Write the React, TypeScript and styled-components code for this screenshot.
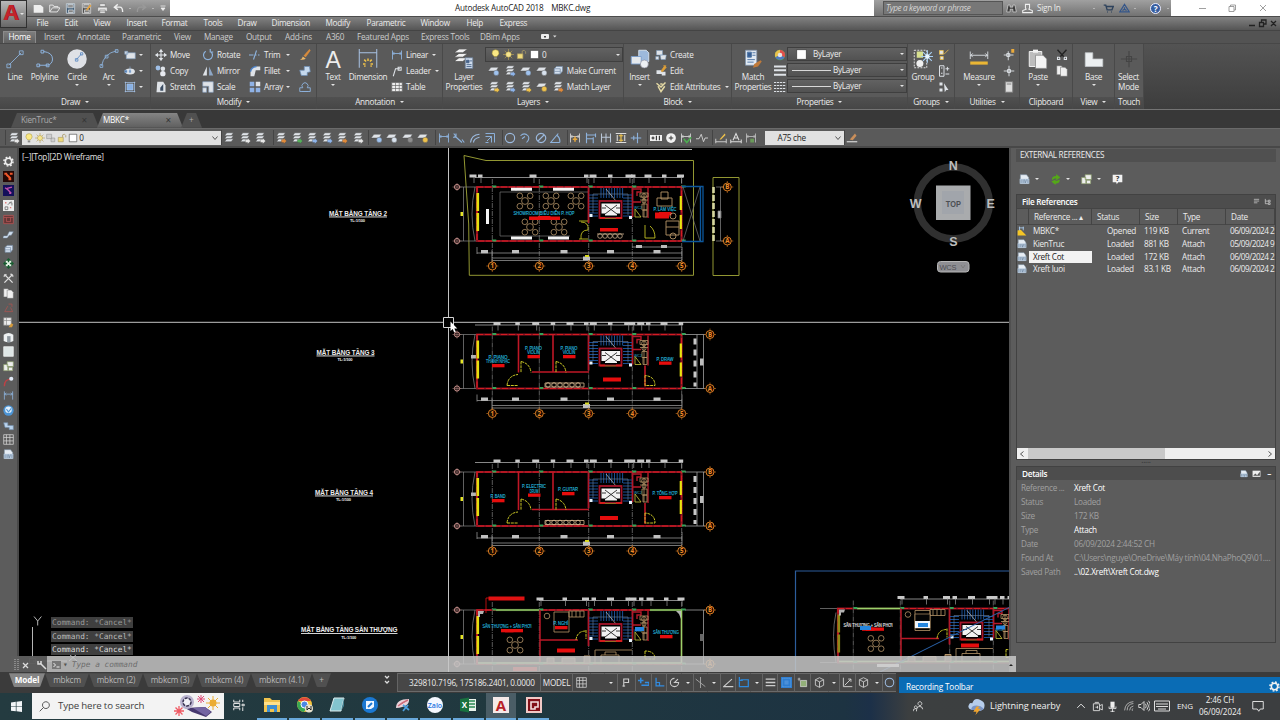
import React from 'react';
import styled, { createGlobalStyle, css } from 'styled-components';

const GlobalStyle = createGlobalStyle`
    * {
        box-sizing: border-box;
    }

    body {
        margin: 0;
        overflow: hidden;
        background: #5b5b5b;
        color: #ececec;
        font-family: 'Open Sans', 'Noto Sans', sans-serif;
        font-size: 8.2px;
        line-height: 10px;
        letter-spacing: -0.28px;
        white-space: nowrap;
    }

    svg {
        display: block;
        flex: none;
        letter-spacing: 0;
    }
`;

/* ---------- icons ---------- */

const L = '#dfe3e8';
const B = '#8db2dc';
const Y = '#f0c24a';

const Stack = ({ accent }: { accent?: string }) => (
    <>
        <path d="M5 1h9l-3 4H2zM5 5h9l-3 4H2zM5 9h9l-3 4H2z" fill={L} stroke="#4a4a4a" strokeWidth=".7" />
        {accent && <path d="M8.5 10h3v-2l4 4-4 4v-2h-3z" fill={accent} stroke="#444" strokeWidth=".4" />}
    </>
);

const Sheet = ({ accent }: { accent: string }) => (
    <>
        <path d="M4 3h10l-3 5H0z" fill={L} stroke="#4a4a4a" strokeWidth=".6" />
        <circle cx="11" cy="10.500" r="3.500" fill={accent} stroke="#555" strokeWidth=".5" />
    </>
);

const Dim = ({ accent = B }: { accent?: string }) => (
    <path d="M2 2v12M14 2v12M2 6h12M4.5 4 2.5 6l2 2M11.5 4l2 2-2 2" fill="none" stroke={accent} strokeWidth="1.2" />
);

const Page = ({ x = 3, y = 1 }: { x?: number; y?: number }) => (
    <path d={`M${x} ${y}h6l3 3v9h-9z`} fill="#f0f0f0" stroke="#666" strokeWidth=".7" />
);

const glyphs: Record<string, React.ReactNode> = {
    new: <path d="M1 3h10l4 3v8H1z" fill="#eee" />,
    open: <path d="M1 13V3h5l1 2h6v2M1 13l4-6h11l-4 6z" fill="none" stroke="#e4e4e4" strokeWidth="1.4" />,
    save: <path d="M2 1h12v14H2zM4 2v5h8V2zM5 10v4h7v-4z" fill="#3e5a74" stroke="#e4e9ee" fillRule="evenodd" />,
    saveas: (
        <>
            <path d="M2 1h12v14H2zM4 2v5h8V2zM5 10v4h7v-4z" fill="#4a4a4a" stroke="#eee" fillRule="evenodd" />
            <path d="m7 10 6-8 2 2-6 7z" fill="#e8a33c" />
        </>
    ),
    print: <path d="M4 1h8v4H4zM1 6h14v6H1zM4 10h8v5H4z" fill="#e6e6e6" stroke="#666" strokeWidth=".7" />,
    undo: <path d="M7 2 2 6l5 4M2 6h8q4 0 4 7" fill="none" stroke="#eee" strokeWidth="2" />,
    redo: <path d="m9 2 5 4-5 4M14 6H6q-4 0-4 7" fill="none" stroke="#999" strokeWidth="2" />,
    menu: <path d="M3 4h10M4 8h8l-4 5z" fill="#eee" stroke="#eee" strokeWidth="1.6" />,
    binoculars: <path d="M3 3h3v3h4V3h3l2 10h-5V9H6v4H1z" fill="#3b3b3b" stroke="#ddd" />,
    user: <path d="M5 2h6v5l-1 2 5 2v3H1v-3l5-2-1-2z" fill="none" stroke="#f0f0f0" strokeWidth="1.5" />,
    cart: <path d="M1 3h3l2 7h7l2-5H5M6 13h1M12 13h1" fill="none" stroke="#2e425c" strokeWidth="2" />,
    triangle: <path d="M8 2 1 13h14zM8 6v4M5 11l3-2 3 2" fill="none" stroke="#33558a" strokeWidth="1.7" />,
    line: <path d="M3 13 13 3M1.5 12h3v3h-3zM11.5 1.5h3v3h-3z" fill="none" stroke={B} strokeWidth=".7" />,
    polyline: (
        <path d="M3 13h7q4-1 4-5 0-5-7-6M1.5 12h2.2v2.2H1.500zM4.800 1H7v2.200H4.800zM9 12h2.200v2.200H9z" fill="none" stroke={B} strokeWidth=".8" />
    ),
    circle: (
        <>
            <circle cx="8" cy="8" r="7.8" fill="#dfe1e6" />
            <path d="m7.5 8.500 4-4.500M6.700 7.700h2v2h-2zM10.800 3h1.800v1.800h-1.800z" fill="none" stroke="#5e8cc4" strokeWidth=".7" />
        </>
    ),
    arc: (
        <path d="M2 13.500Q4 3.500 14 1.500M.8 12.500h2.200v2.200H.8zM5 5h2.200v2.200H5zM13 .5h2.200v2.200H13z" fill="none" stroke={B} strokeWidth=".7" />
    ),
    rect: <path d="M3 5h12v8H3zM1 3h4v4H1z" fill={L} stroke="#7899bd" strokeWidth=".8" />,
    ellipse: (
        <>
            <ellipse cx="8" cy="8.500" rx="6.500" ry="4" fill={L} />
            <path d="M8 2v5M1 7h3v3H1zM7 7h2v3H7z" fill="#4f79ad" stroke={B} strokeWidth=".8" />
        </>
    ),
    hatch: <path d="M2 1v14M14 1v14M1 2h14M1 14h14M4 4h8v8H4z" fill="#88b0e4" stroke="#a9c8ee" strokeWidth=".9" />,
    move: (
        <>
            <path d="M8 1v14M1 8h14" stroke={L} strokeWidth="1.500" />
            <path d="m8 0 3 4H5zM8 16l3-4H5zM0 8l4-3v6zM16 8l-4-3v6z" fill={L} />
        </>
    ),
    copy: (
        <>
            <circle cx="4" cy="4" r="3.200" fill="#9fbfe6" />
            <circle cx="10.500" cy="5" r="3" fill={L} />
            <circle cx="10.500" cy="11.500" r="3.600" fill="#e8eaf0" />
        </>
    ),
    stretch: (
        <>
            <path d="M3 1h8l3 5v9H2z" fill={L} />
            <path d="m7 9 4-5v9H7z" fill="#3b4c62" />
        </>
    ),
    rotate: <path d="M5 3a6 6 0 1 0 6 0M11 0v4h4" fill="none" stroke={B} strokeWidth="1.600" />,
    mirror: (
        <>
            <path d="M6.500 2v12H1z" fill={L} />
            <path d="M9.500 2v12H15z" fill="#8ea7c6" />
        </>
    ),
    scale: <path d="M1 1h14v14H9V7H1zM1 9h5v6H1z" fill={L} stroke="#88a4c8" strokeWidth=".8" />,
    trim: <path d="M0 8h6M8 8h2M12 8h2M6 14 10 2" stroke={B} strokeWidth="1.500" fill="none" />,
    fillet: (
        <>
            <path d="M2 15V9q1-6 8-7h5v5H9l-2 8z" fill={L} />
            <path d="M2 9q1-6 8-7" fill="none" stroke="#4f82c5" strokeWidth="2" />
        </>
    ),
    array: (
        <>
            <path d="M1 1h6v6H1zM1 9h6v6H1zM9 9h6v6H9z" fill="#8fb2e6" />
            <path d="M9 1h6v6H9z" fill={L} />
        </>
    ),
    brush: (
        <>
            <path d="M6 9 14 0l1.500 2L9 11z" fill="#d68a3c" />
            <path d="M1 14q3 0 4-4l4 3q-3 2-8 1z" fill="#eeb868" />
        </>
    ),
    explode: <path d="M1 7h6V2h7l1 7-4 1v4H3z" fill="#c5d9ee" stroke="#6d8eb4" />,
    offset: <path d="M5 9a4 4 0 1 1 6 0h4v5H1V9zM4 14h8" fill="none" stroke={B} strokeWidth="1.200" />,
    bigdim: (
        <>
            <path d="M1 0v15M15 0v15M1 3h14" fill="none" stroke="#a9c3e5" strokeWidth=".8" />
            <path d="M4 12h2M10 12h2M5 8.500l1.500 1.500M11 8.500 9.500 10M8 7.500v2M5 14l1-.700M11 14l-1-.700" stroke={Y} strokeWidth="1.200" />
        </>
    ),
    dim: <Dim />,
    leader: <path d="M3 15 6 5h6M9.500 3h4v4h-4z" fill="none" stroke={L} strokeWidth="1.400" />,
    table: <path d="M1 2h14v12H1zM1 6h14M1 10h14M6 2v12M11 2v12" fill="#eee" stroke="#666" strokeWidth=".9" />,
    layerprops: (
        <>
            <path d="M4 0h7L7 3H0zM4 3.500h7L7 6.500H0zM4 7h7l-4 3H0z" fill="#f0f0f0" stroke="#444" strokeWidth=".5" />
            <path d="M9 7h6v8.500H9z" fill="#cfdcec" stroke="#667b96" strokeWidth=".6" />
            <path d="M10 9h2v2h-2zM12.500 9.500h2M10 12.500h4M10 14h4" stroke="#47648a" strokeWidth=".7" fill="#47648a" />
        </>
    ),
    stack: <Stack />,
    stackblue: <Stack accent="#8eb4ea" />,
    stackgreen: <Stack accent="#55b05a" />,
    stackorange: <Stack accent="#e08a3a" />,
    stackyellow: <Stack accent={Y} />,
    stackgray: <Stack accent="#e8e8e8" />,
    sheetblue: <Sheet accent="#9fc2ee" />,
    sheetyellow: <Sheet accent={Y} />,
    sheetwhite: <Sheet accent="#d8e2ee" />,
    sheetgray: <Sheet accent="#8e8e8e" />,
    bulb: (
        <>
            <path d="M8 1q5 0 5 5 0 2-3 5H6Q3 8 3 6q0-5 5-5z" fill="#fbe985" stroke="#a39239" strokeWidth=".8" />
            <path d="M6 12h4v3H6z" fill="#888" />
        </>
    ),
    sun: (
        <>
            <path d="M8 0v16M0 8h16M2.500 2.500l11 11M13.500 2.500l-11 11" stroke="#b39d55" />
            <circle cx="8" cy="8" r="4" fill="#f6e58f" stroke="#a08c3b" strokeWidth=".7" />
        </>
    ),
    lock: (
        <>
            <path d="M9 7V3q3-3 5 1v3" fill="none" stroke="#a69662" strokeWidth="1.200" />
            <path d="M2 7h8v7H2z" fill="#f0db7a" stroke="#a69662" />
        </>
    ),
    white: <path d="M2 2h12v12H2z" fill="#fff" stroke="#333" strokeWidth=".9" />,
    freeze: <path d="M1 2h8v7H1zM8 8h6v6H8z" fill="#cfcfcf" stroke="#999" />,
    insert: (
        <>
            <path d="M7 1h6l2 2v7H7z" fill="#9db9dc" stroke="#dde7f2" strokeWidth=".7" />
            <path d="M1 6h8v6H1z" fill="#e4e8ec" stroke="#779ccb" strokeWidth=".7" />
            <circle cx="11.500" cy="12" r="3.200" fill="#eef0f4" stroke="#889" strokeWidth=".5" />
        </>
    ),
    create: <path d="M2 2h8v6H2zM7 8h8l-1 6H8zM1 10h4v4H1z" fill={L} stroke="#7d9dc2" strokeWidth=".7" />,
    edit: (
        <>
            <path d="M2 7h7v5H2zM9 9h5v5H9z" fill={L} />
            <path d="m8 8 5-7 2 2-5 6zM11 1h4" fill="#dfa038" stroke="#dfa038" />
        </>
    ),
    attr: <path d="m2 3 6 5 6-6M4 7l4 7 5-7M7 4h3" fill="none" stroke="#e4d9a4" strokeWidth="2" />,
    match: (
        <>
            <path d="M2 1h9v12H2z" fill="#e2eaf3" stroke="#7f93ab" strokeWidth=".6" />
            <path d="M3.500 2.500h3.200v4H3.500zM7.500 3h2.500M7.500 5h2.500M3.500 8.500h6M3.500 10.500h5" stroke="#547aa8" strokeWidth=".8" fill="#365e95" />
            <path d="m9 12 5-3 1 1-3 4-4 1z" fill="#c07a3a" />
        </>
    ),
    wheel: (
        <>
            <circle cx="8" cy="8" r="7" fill="#58a55c" />
            <path d="M8 8V1a7 7 0 0 1 6 10z" fill="#e2504b" />
            <path d="M8 8V1a7 7 0 0 0-6 10z" fill="#e9c14b" />
            <path d="m8 8-6 3a7 7 0 0 0 12 0z" fill="#5079c5" />
            <circle cx="8" cy="8" r="3" fill="#e5e5e5" />
        </>
    ),
    weights: <path d="M0 2h16M0 7h16M0 13h16" stroke={L} strokeWidth="2.600" />,
    types: <path d="M0 2h16M0 6h16M0 10h16M0 14h16" stroke={L} strokeWidth="1.300" strokeDasharray="3 1" />,
    group: (
        <>
            <path d="M1 1h10v14H1z" fill="none" stroke="#ddd" strokeWidth=".8" strokeDasharray="1.500 1" />
            <path d="M3 2h5v5H3z" fill="#d7e08f" />
            <circle cx="5.500" cy="11.500" r="2.800" fill="#f0f0f0" />
            <path d="M11.500 1v10M6.500 6h10M8 2.500l7 7M15 2.500l-7 7" stroke="#a9d0f4" strokeWidth=".9" />
            <circle cx="11.500" cy="6" r="1.800" fill="#e9f5ff" />
        </>
    ),
    groupedit: <path d="M2 2h5v5H2zM3 10h4v4H3zM8 7l6-6" fill={L} stroke={Y} />,
    groupadd: <path d="M2 1h6v14H2zM4 4h2M4 11h2M10 5h5M12.500 2.500v5M10 12h5" fill="none" stroke={L} strokeWidth="1.300" />,
    groupsel: <path d="M2 2h4v4H2zM2 10h4v4H2zM8 3l6 9h-3l-2 3z" fill={L} />,
    measure: (
        <>
            <path d="M1 2v6M15 2v6M1 5h14M3 3.500 1.500 5 3 6.500M13 3.500 14.500 5 13 6.500" stroke="#dfe3e8" strokeWidth=".7" fill="none" />
            <path d="M1 10h14v2.500H1z" fill="#eab634" />
        </>
    ),
    point: <path d="M8 1v14M1 8h14M6 6h4v4H6z" fill="none" stroke={L} strokeWidth="1.200" />,
    quick: (
        <>
            <path d="M7 3v12M1 8h13M5 6h4v4H5z" fill="none" stroke={L} strokeWidth="1.200" />
            <path d="M11 0h4v5h-4z" fill="#e9aa3c" />
        </>
    ),
    calc: <path d="M3 1h10v14H3zM5 4h6" fill="#ddd" stroke="#777" strokeWidth="1.200" />,
    paste: (
        <>
            <path d="M1 2h10v12H1z" fill="#bdbdbd" stroke="#f0f0f0" strokeWidth=".8" />
            <path d="M4 .5h4v2.500H4z" fill="#f2f2f2" />
            <path d="M6 5h6l3 3v7.500H6z" fill="#f4f4f4" stroke="#777" strokeWidth=".5" />
        </>
    ),
    cut: (
        <>
            <path d="m2 1 9 10M14 1 5 11" stroke="#222" strokeWidth="1.800" />
            <path d="M2 11h3v3H2zM11 11h3v3h-3z" fill="none" stroke={L} strokeWidth="1.400" />
        </>
    ),
    pages: (
        <>
            <Page x={1} y={1} />
            <Page x={6} y={3} />
        </>
    ),
    base: <path d="M1 3h6v5h8v6H1z" fill="#eceff1" stroke="#c4c8cc" strokeWidth=".6" />,
    touch: <path d="M8 1.500v13M1.500 8h13M6 6h4v4H6z" fill="none" stroke="#444" strokeWidth=".9" />,
    ring: <circle cx="8" cy="8" r="6.200" fill="none" stroke="#9dbbe0" strokeWidth="1.500" />,
    diameter: <path d="M8 1.800a6.200 6.200 0 1 0 .1 0M4 12l8-8" fill="none" stroke="#9dbbe0" strokeWidth="1.500" />,
    jog: <path d="M2 5q5-5 10 0 3 4-2 9M4 9l4-3" fill="none" stroke={B} strokeWidth="1.400" />,
    angle: <path d="M13 14H1L11 2M9 4q5 4 4 10" fill="none" stroke={B} strokeWidth="1.500" />,
    aligned: <path d="m2 5 10 9M1 2l3 4M12 10l3 4M4 2v5H0" fill="none" stroke={B} strokeWidth="1.500" />,
    arclen: <path d="M2 14Q3 4 14 3M6 14q0-5 8-7" fill="none" stroke="#9dbbe0" strokeWidth="1.500" />,
    ordinate: <path d="M2 2h12v12M2 6h8v8M4 12l6-6M6 14H2" fill="none" stroke={B} strokeWidth="1.300" />,
    dimstar: (
        <>
            <Dim accent="#d0d0d0" />
            <path d="M8 6v7M5 9.500h6" stroke="#e7a83b" strokeWidth="2" />
        </>
    ),
    baseline: <path d="M2 1v14M2 4h12M2 9h9M14 2v5M11 7v8" fill="none" stroke={B} strokeWidth="1.500" />,
    cont: <path d="M2 2v12M8 2v12M14 2v12M2 7h12" fill="none" stroke="#bac7d8" strokeWidth="1.400" />,
    space: (
        <>
            <path d="M1 2h14M1 14h14M3 4v8M13 4v8" stroke="#ddd" strokeWidth="1.400" />
            <path d="M8 3v10M5 5h6M5 11h6" stroke={Y} strokeWidth="1.600" />
        </>
    ),
    breakdim: <path d="M10 1v14M1 8h14M5 5v6" fill="none" stroke={B} strokeWidth="1.500" />,
    tol: (
        <>
            <path d="M0 4h16v8H0z" fill="#f0f0f0" />
            <path d="M2 8h4M4 6v4M8.500 5v6M12.500 5v6" stroke="#222" strokeWidth="1.400" />
        </>
    ),
    center: (
        <>
            <circle cx="8" cy="8" r="6.500" fill="#f1f1f1" />
            <path d="M8 5v6M5 8h6" stroke="#333" strokeWidth="1.300" />
        </>
    ),
    inspect: (
        <>
            <Dim accent="#d0d0d0" />
            <path d="m5 9 4 5 6-7" fill="none" stroke="#4cae50" strokeWidth="2" />
        </>
    ),
    zigzag: <path d="M0 9h4l3-6 3 10 2-5h4" fill="none" stroke="#ccc" strokeWidth="1.300" />,
    dimedit: (
        <>
            <path d="M1 13h14M1 9v6M15 9v6" stroke="#ccc" strokeWidth="1.300" />
            <path d="m6 10 7-8 1 2-6 6z" fill={Y} />
        </>
    ),
    dimtext: <path d="M1 13h14M1 10v5M15 10v5M4 11l4-9 4 9M6 8h4" fill="none" stroke="#ddd" strokeWidth="1.400" />,
    dimupd: (
        <>
            <Dim accent="#b9b9b9" />
            <path d="M7 9h5v5H7z" fill="#6a9a5a" />
        </>
    ),
    dimbrush: (
        <>
            <path d="M1 13h14" stroke="#ddd" strokeWidth="1.500" />
            <path d="m5 10 7-8 2 3-5 6z" fill="#c98e5a" />
        </>
    ),
    gear: (
        <>
            <circle cx="8" cy="8" r="4.600" fill="none" stroke="#f1f1f1" strokeWidth="2.200" />
            <circle cx="8" cy="8" r="6.600" fill="none" stroke="#f1f1f1" strokeWidth="2.200" strokeDasharray="2.590 2.590" />
        </>
    ),
    redtool: (
        <>
            <path d="M0 0h16v16H0z" fill="#240806" />
            <path d="M2 4h4M10 4h4M5 5l6 6M8 12h4" stroke="#f0572b" strokeWidth="3" />
        </>
    ),
    purpletool: (
        <>
            <path d="M0 0h16v16H0z" fill="#14105a" />
            <path d="m3 4 3 2 6 6M6 5l7-2M9 12h3" fill="none" stroke="#c24fae" strokeWidth="2" />
        </>
    ),
    scatter: (
        <>
            <path d="M0 0h16v16H0z" fill="#ececec" />
            <path d="M3 10h4v4H3zM7 7l5-5M9 4h4v4" fill="none" stroke="#6b6b6b" strokeWidth="1.200" />
            <path d="M3 3h2v2H3zM10 10h2v2h-2z" fill="#dc7777" />
        </>
    ),
    redframe: <path d="M1 2v12h14V2zM1 5h14M5 5v6h6V5" fill="#643636" stroke="#b85656" strokeWidth="1.100" />,
    slab: <path d="M1 10h5l3-6h6l-3 5H9l-3 4H0z" fill="#d3e1ef" stroke="#7b93ad" strokeWidth=".7" />,
    box: <path d="m3 5 3-3h8v6l-3 4H3zM3 5h8v7M3 8.500h8" fill="#d5e1ef" stroke="#788da8" />,
    green: (
        <>
            <path d="m8 0 4 4 4 4-4 4-4 4-4-4-4-4 4-4z" fill="#185c30" />
            <path d="M4 4h3v2h2V4h3v3h-2v2h2v3H9v-2H7v2H4V9h2V7H4z" fill="#e7f4e7" />
        </>
    ),
    tools: <path d="m2 2 12 12M14 2 2 14M1 5l4-3M11 1l4 4" stroke="#ddd" strokeWidth="2" />,
    redaxis: <path d="M2 14h12L11 8M3 13l4-7M8 3h5v4" fill="none" stroke="#a65450" strokeWidth="1.200" />,
    grid: <path d="M1 1h14v14H1zM1 5h14M1 10h14M5 1v14M10 1v14" fill="none" stroke="#d5d5d5" strokeWidth="1.100" />,
    gridedit: (
        <>
            <path d="M1 1h11v11H1zM1 5h11M5 1v11" fill="#eee" stroke="#888" />
            <path d="m8 15 4-6 3 2-2 4z" fill="#d59b3c" />
        </>
    ),
    cylinder: (
        <>
            <path d="M1 4q7-5 14 0v9q-7 4-14 0z" fill="#eef1f2" />
            <path d="M6 6h5v9H6z" fill="#8e979e" />
        </>
    ),
    square: <path d="M1 1h14v14H1z" fill="#dfe6e6" stroke="#f6f6f6" />,
    tiles: <path d="M6 1h9v7H6zM1 5h6v9H1zM8 9h6v5H8z" fill="#eee" stroke="#8a9d6a" />,
    redcurve: (
        <>
            <path d="M2 15Q2 4 12 5" fill="none" stroke="#bd4145" strokeWidth="2" />
            <circle cx="12" cy="4" r="3" fill="#e3edfa" />
        </>
    ),
    globe: (
        <>
            <circle cx="8" cy="8" r="7.500" fill="#4c95d6" />
            <circle cx="8" cy="7" r="4.800" fill="#e1effb" />
            <path d="m5 6 3 4 4-5" fill="none" stroke="#4c95d6" strokeWidth="1.500" />
        </>
    ),
    steps: <path d="M1 4h6v4h8v6H9v-3H3z" fill="#b8d2ed" stroke="#738da8" />,
    refresh: <path d="M3 9Q2 3 9 3V0l6 5-6 4V6Q6 6 3 9zM14 8q1 6-6 6v2l-6-5 6-3v2q3 0 6-2z" fill="#54a818" />,
    dwg: (
        <>
            <path d="M2 1h9l3 4v9H2z" fill="#e6edf4" stroke="#8296ab" strokeWidth=".8" />
            <path d="M1 7h14v7H1z" fill="#b7cade" />
            <path d="M3 8v5M6 8v5M8 8l1 5 2-5M13 8v5" stroke="#5c748e" strokeWidth=".8" fill="none" />
        </>
    ),
    master: (
        <>
            <path d="m1 7 5-1 9 9H1z" fill="#f4c526" />
            <path d="M3 3h8M4 1v6M10 1v6" stroke="#a9cbee" strokeWidth="1.400" />
        </>
    ),
    tree: <path d="M3 2v11h6M3 7h6M10 5h4v4h-4zM10 11h4v4h-4z" fill="none" stroke="#ddd" strokeWidth="1.500" />,
    list: <path d="M2 3h12M2 7h12M2 11h8" stroke="#ccc" strokeWidth="1.700" />,
    help: (
        <>
            <path d="M1 1h14v11H9l-2 3-1-3H1z" fill="#f2f2f2" />
            <text x="8" y="10.500" textAnchor="middle" fontSize="11" fontWeight="700" fill="#333">?</text>
        </>
    ),
    picture: (
        <>
            <path d="M1 3h14v11H1z" fill="#eee" />
            <path d="m2 12 4-4 3 3 5-6v7z" fill="#555" />
        </>
    ),
    snap: <path d="M4 14V3h7v5H5M2 13h4" fill="none" stroke="#d0d0d0" strokeWidth="1.600" />,
    dyn: <path d="M4 1v8M0 5h8M5 12h11V8h-6" fill="none" stroke="#338ce0" strokeWidth="2.200" />,
    ortho: <path d="M3 1v12h12M3 8h5v5" fill="none" stroke="#338ce0" strokeWidth="1.800" />,
    polar: <path d="M8 2a6 6 0 1 0 6 6H8l5-5" fill="none" stroke="#ccc" strokeWidth="1.600" />,
    iso: <path d="m1 3 14 11M8 0v16" stroke="#aaa" strokeWidth="1.300" />,
    otrack: <path d="M15 14H1L13 3" fill="none" stroke="#ccc" strokeWidth="1.500" />,
    osnap: <path d="M4 4h11v10H2V6M2 0v5h5" fill="none" stroke="#2d8ade" strokeWidth="1.800" />,
    lwt: <path d="M1 3h14M1 8h14M1 12.500h14" stroke="#ccc" strokeWidth="2" />,
    transp: (
        <>
            <path d="M0 0h16v16H0z" fill="#2e7dd0" />
            <path d="M2 2h12v12H2z" fill="none" stroke="#5b9ce0" strokeWidth="1.500" strokeDasharray="1.500 1.500" />
            <path d="M5 5h6v6H5z" fill="#4b90da" />
        </>
    ),
    select: <path d="M1 3h4M3 1v5M5 5h9v9H5z" fill="#93b079" stroke="#dcdcdc" />,
    cube: <path d="m8 1 6 3v8l-6 3-6-3V4zM2 4l6 3 6-3M8 7v8" fill="none" stroke="#ccc" strokeWidth="1.300" />,
    ucs: <path d="M2 1v13h13M4 12 13 3M9 3h4v4" fill="none" stroke="#ccc" strokeWidth="1.400" />,
    search: <path d="M10 1a5 5 0 1 0 .1 0M6 10l-5 5" fill="none" stroke="#444" strokeWidth="1.300" />,
    taskview: <path d="M1 1v3h8V1M1 15v-3h8v3M1 6h8v4H1zM13 1v3M12 7h3v2h-3zM13 11v5" fill="none" stroke="#e6e6e6" strokeWidth="1.300" />,
    folder: (
        <>
            <path d="M0 1h6l2 2h8v12H0z" fill="#f0c24d" />
            <path d="M3 8h10v7h-3v-3H6v3H3z" fill="#3e8ed0" />
            <path d="M0 5h16v3H0z" fill="#ffe089" />
        </>
    ),
    chrome: (
        <>
            <circle cx="7.500" cy="7.500" r="7.500" fill="#f4c53c" />
            <path d="M1 4a7.500 7.500 0 0 1 13 0H8z" fill="#df493c" />
            <path d="M1 4a7.500 7.500 0 0 0 6 11l3-5z" fill="#37a854" />
            <circle cx="7.500" cy="7.500" r="3.500" fill="#4a88e5" stroke="#fff" />
            <circle cx="12" cy="11.500" r="4" fill="#e7e1ce" />
            <path d="M10 9v4l2-2 2 2V9" fill="none" stroke="#222" />
        </>
    ),
    notepad: (
        <>
            <path d="M5 1h10l-3 13H1z" fill="#83c4ce" stroke="#dcebed" />
            <path d="m12 14 3-13v8z" fill="#447f8e" />
        </>
    ),
    bluedoc: (
        <>
            <circle cx="8" cy="8" r="8" fill="#1b78d2" />
            <path d="M4 4h8v6l-3 2H4z" fill="#eef6ff" />
            <path d="m6 10 4-4" stroke="#1b78d2" strokeWidth="2" />
        </>
    ),
    snip: (
        <>
            <path d="M1 11q0-9 13-9 1 8-13 9z" fill="#ead4da" />
            <path d="M3 9q5-4 10-6" stroke="#d16c7c" strokeWidth="1.500" />
            <path d="m8 8 6 5M13 8l-5 6" stroke="#4c9ddd" strokeWidth="1.700" />
        </>
    ),
    zalo: (
        <>
            <circle cx="8" cy="8" r="8" fill="#f4f8ff" />
            <text x="8" y="10.500" textAnchor="middle" fontSize="7" fontWeight="600" fill="#2272df">Zalo</text>
        </>
    ),
    excel: (
        <>
            <path d="M5 2h11v12H5z" fill="#e8f2eb" />
            <path d="M9 4h6M9 7h6M9 10h6" stroke="#2b8955" strokeWidth="1.600" />
            <path d="m0 2 9-1.500v15L0 14z" fill="#19713f" />
            <text x="4.500" y="11" textAnchor="middle" fontSize="8" fontWeight="700" fill="#fff">X</text>
        </>
    ),
    acad: (
        <>
            <path d="M0 0h16v16H0z" fill="#f5e9e8" />
            <text x="8" y="13.500" textAnchor="middle" fontSize="15" fontWeight="700" fill="#b81f28">A</text>
        </>
    ),
    redapp: (
        <>
            <path d="M0 0h16v16H0z" fill="#f1c9c6" />
            <path d="M2 2h12v12H2z" fill="#820f17" />
            <path d="M5 5h7v5H9v2H5z" fill="none" stroke="#f4dede" strokeWidth="1.600" />
        </>
    ),
    people: (
        <path d="M10 1a2.800 2.800 0 1 0 .1 0M5 15q0-7 5-7 4 0 4 4M4 7a2 2 0 1 0 .1 0M0 15q0-4 4-4" fill="none" stroke="#ddd" strokeWidth="1.300" />
    ),
    storm: (
        <>
            <path d="M3 11q-4-1-2-5 1-2 3-1 2-6 8-3 5 2 3 8l-3 2z" fill="#b6cdeb" />
            <path d="M3 11q0-4 5-4 4 0 7 3l-3 2z" fill="#7894c6" />
            <path d="m8 8-3 5h3l-1 3 5-6H9l2-2z" fill="#f0a42e" />
        </>
    ),
    caret: <path d="m2 11 6-6 6 6" fill="none" stroke="#eee" strokeWidth="1.500" />,
    camera: <path d="M2 4h9v10H2zM11 7l4-2v8l-4-2M4 2h6M8 7v4M5 9h4" fill="none" stroke="#ddd" strokeWidth="1.300" />,
    mic: (
        <>
            <path d="M5 1h6v9H5z" fill="#eee" />
            <path d="M3 8v3h10V8M8 11v5M5 15h6" fill="none" stroke="#eee" strokeWidth="1.200" />
        </>
    ),
    wifi: <path d="M14 15h-1q0-2 1-3M9 15q0-6 6-7M5 15Q5 5 15 4M1 15Q2 2 15 1" fill="none" stroke="#bbb" strokeWidth="1.400" />,
    volume: <path d="M1 6h3l4-4v12l-4-4H1zM10 5q2 3 0 6M12 3q4 5 0 10M14 1q5 7 0 14" fill="none" stroke="#ddd" strokeWidth="1.200" />,
    keyboard: <path d="M.5 3h15v10H.5zM2 6h12M2 8.500h12M4 11h8" fill="none" stroke="#ddd" strokeWidth="1" />,
    notify: <path d="M1 2h14v10h-4l-2 3-2-3H1z" fill="none" stroke="#eee" strokeWidth="1.200" />,
    windows: <path d="m0 2 7-1v6.500H0zM8 1l8-1v7.500H8zM0 8.500h7V15l-7-1zM8 8.500h8V16l-8-1z" fill="#f2f5f7" />,
    chevron: <path d="m3 5 5 6 5-6" fill="none" stroke="#555" strokeWidth="2" />,
};

const Icon = ({ name, size = 11 }: { name: string; size?: number }) => (
    <svg width={size} height={size} viewBox="0 0 16 16">
        {glyphs[name]}
    </svg>
);

const Arrow = styled.i<{ $size?: number }>`
    flex: none;
    width: 0;
    border: ${({ $size = 2 }) => $size}px solid transparent;
    border-top-color: #e4e4e4;
    border-bottom: 0;
`;

/* ---------- window frame ---------- */

const Window = styled.div`
    display: flex;
    flex-direction: column;
    width: 1280px;
    height: 720px;
`;

const Header = styled.div`
    display: flex;
    height: 31px;
    background: #535353;
`;

const AppButton = styled.div`
    display: flex;
    align-items: center;
    width: 27px;
    height: 28px;
    padding-left: 2px;
    border: 1px solid #303030;
    background: linear-gradient(#b9b9b9, #676767);
`;

const AppLetter = styled.b`
    width: 17px;
    padding-bottom: 3px;
    color: #c3232b;
    font-family: 'Liberation Sans', sans-serif;
    font-size: 22px;
    line-height: 22px;
    text-shadow: 1px 0 #8f1118;
`;

const HeaderRows = styled.div`
    flex: 1;
    min-width: 0;
`;

const TitleRow = styled.div`
    display: flex;
    height: 16px;
    background: #fff;
`;

const QuickBar = styled.div`
    display: flex;
    align-items: center;
    gap: 5px;
    width: 143px;
    padding-left: 6px;
    background: linear-gradient(#a2a2a2, #747474);
`;

const Caption = styled.div`
    flex: 1;
    padding: 3px 0 0 285px;
    color: #222;
    letter-spacing: -0.22px;
    white-space: pre;
`;

const InfoCenter = styled.div`
    display: flex;
    align-items: center;
    width: 297px;
    background: linear-gradient(#a0a0a0, #727272);
`;

const KeywordBox = styled.div`
    width: 120px;
    height: 14px;
    margin: 0 3px 0 9px;
    padding: 1px 2px;
    border: 1px solid #555;
    background: #777;
    color: #d5d5d5;
    font-style: italic;
    letter-spacing: -0.35px;
`;

const SignIn = styled.span`
    width: 56px;
    margin-left: 4px;
`;

const HelpDot = styled.span`
    width: 11px;
    height: 11px;
    margin: 0 6px 0 14px;
    border: 1px solid #eef;
    border-radius: 50%;
    background: #355da0;
    color: #fff;
    font-weight: 700;
    line-height: 9px;
    text-align: center;
`;

const WindowButtons = styled.div`
    display: flex;
    align-items: center;
    justify-content: space-between;
    width: 109px;
    padding: 0 13px 0 28px;
`;

const MenuBar = styled.div`
    display: flex;
    align-items: center;
    height: 15px;
    padding-bottom: 1px;
    border-top: 1px solid #4c4c4c;
    border-bottom: 1px solid #444;
    background: linear-gradient(#828282, #555);
`;

const Slot = styled.div<{ $w?: number }>`
    flex: none;
    width: ${({ $w }) => ($w ? `${$w}px` : 'auto')};
`;

const RibbonTabs = styled.div`
    display: flex;
    align-items: center;
    height: 12px;
    background: #535353;
    color: #ccc;
`;

const HomeTab = styled.div`
    flex: none;
    width: 33px;
    height: 12px;
    margin: 0 8px 0 3px;
    border: 1px solid #8b8b8b;
    border-bottom: 0;
    background: linear-gradient(#7d7d7d, #606060);
    color: #fff;
    text-align: center;
`;

/* ---------- ribbon ---------- */

const RibbonRow = styled.div`
    display: flex;
    height: 67px;
    border-top: 1px solid #474747;
    border-bottom: 1px solid #747474;
    background: linear-gradient(#535353, #3d3d3d);
`;

const RibbonPanel = styled.div<{ $w: number }>`
    display: flex;
    flex: none;
    flex-direction: column;
    width: ${({ $w }) => $w}px;
    border-right: 1px solid #494949;
    background: #5a5a5a;
`;

const PanelBody = styled.div<{ $pad?: number }>`
    display: flex;
    height: 53px;
    padding: 3px 0 0 ${({ $pad = 0 }) => $pad}px;
`;

const PanelTitle = styled.div`
    display: flex;
    align-items: center;
    justify-content: center;
    gap: 5px;
    height: 12px;
    padding-bottom: 2px;
    background: linear-gradient(#505050, #464646);
`;

const BigRoot = styled.div<{ $w: number }>`
    display: flex;
    flex: none;
    flex-direction: column;
    align-items: center;
    width: ${({ $w }) => $w}px;
    padding-top: 2px;
    text-align: center;

    svg {
        margin-bottom: 3px;
    }

    ${Arrow} {
        margin-top: 2px;
    }
`;

const BigText = styled.div`
    height: 20px;
    margin-bottom: 3px;
    font-family: 'Liberation Sans', sans-serif;
    font-size: 23px;
    line-height: 22px;
`;

const Rows = styled.div<{ $w: number }>`
    flex: none;
    width: ${({ $w }) => $w}px;
`;

const SmallRoot = styled.div`
    display: flex;
    align-items: center;
    gap: 3px;
    height: 16px;
`;

const Big = ({ icon, label, w, arrow }: { icon: string; label: string; w: number; arrow?: boolean }) => (
    <BigRoot $w={w}>
        {icon === 'text' ? <BigText>A</BigText> : <Icon name={icon} size={20} />}
        {label.split(' ').map((word) => (
            <div key={word}>{word}</div>
        ))}
        {arrow && <Arrow />}
    </BigRoot>
);

const Small = ({ icon, label, lw, arrow }: { icon: string; label?: string; lw?: number; arrow?: boolean }) => (
    <SmallRoot>
        <Icon name={icon} size={12} />
        {label && <Slot $w={lw}>{label}</Slot>}
        {arrow && <Arrow />}
    </SmallRoot>
);

const Panel = ({ title, w, pad, arrow = true, children }: {
    title: string;
    w: number;
    pad?: number;
    arrow?: boolean;
    children: React.ReactNode;
}) => (
    <RibbonPanel $w={w}>
        <PanelBody $pad={pad}>{children}</PanelBody>
        <PanelTitle>
            {title}
            {arrow && <Arrow $size={2.5} />}
        </PanelTitle>
    </RibbonPanel>
);

const Combo = styled.div<{ $w: number; $thin?: boolean }>`
    display: flex;
    align-items: center;
    gap: 2px;
    width: ${({ $w }) => $w}px;
    height: ${({ $thin }) => ($thin ? 14 : 15)}px;
    margin-bottom: ${({ $thin }) => ($thin ? 2 : 1)}px;
    padding: 0 2px 0 4px;
    border: 1px solid #3f3f3f;
    background: linear-gradient(#626262, #525252);

    ${Arrow} {
        margin-left: auto;
    }
`;

const IconLine = styled.div`
    display: flex;
    align-items: center;
    gap: 4px;
    height: 16px;
    padding-left: 3px;

    div {
        margin-left: -3px;
    }
`;

const Rule = styled.i<{ $w: number }>`
    width: ${({ $w }) => $w}px;
    height: 1px;
    background: #d8d8d8;
`;

const Ribbon = () => (
    <RibbonRow>
        <Panel title="Draw" w={151}>
            <Big icon="line" label="Line" w={30} />
            <Big icon="polyline" label="Polyline" w={29} />
            <Big icon="circle" label="Circle" w={36} arrow />
            <Big icon="arc" label="Arc" w={27} arrow />
            <Slot $w={2} />
            <Rows $w={26}>
                <Small icon="rect" arrow />
                <Small icon="ellipse" arrow />
                <Small icon="hatch" arrow />
            </Rows>
        </Panel>
        <Panel title="Modify" w={166} pad={4}>
            <Rows $w={47}>
                <Small icon="move" label="Move" />
                <Small icon="copy" label="Copy" />
                <Small icon="stretch" label="Stretch" />
            </Rows>
            <Rows $w={47}>
                <Small icon="rotate" label="Rotate" />
                <Small icon="mirror" label="Mirror" />
                <Small icon="scale" label="Scale" />
            </Rows>
            <Rows $w={50}>
                <Small icon="trim" label="Trim" lw={19} arrow />
                <Small icon="fillet" label="Fillet" lw={19} arrow />
                <Small icon="array" label="Array" lw={19} arrow />
            </Rows>
            <Rows $w={14}>
                <Small icon="brush" />
                <Small icon="explode" />
                <Small icon="offset" />
            </Rows>
        </Panel>
        <Panel title="Annotation" w={126}>
            <Big icon="text" label="Text" w={32} arrow />
            <Big icon="bigdim" label="Dimension" w={38} />
            <Slot $w={4} />
            <Rows $w={50}>
                <Small icon="dim" label="Linear" lw={23} arrow />
                <Small icon="leader" label="Leader" lw={26} arrow />
                <Small icon="table" label="Table" />
            </Rows>
        </Panel>
        <Panel title="Layers" w={181}>
            <Big icon="layerprops" label="Layer Properties" w={42} />
            <Rows $w={138}>
                <Combo $w={138}>
                    <Icon name="bulb" />
                    <Icon name="sun" />
                    <Icon name="lock" />
                    <Icon name="white" />
                    <span>0</span>
                    <Arrow $size={2.5} />
                </Combo>
                <IconLine>
                    <Icon name="sheetblue" size={12} />
                    <Icon name="stackblue" size={12} />
                    <Icon name="sheetblue" size={12} />
                    <Icon name="sheetwhite" size={12} />
                    <Icon name="box" size={12} />
                    <div>&nbsp;Make Current</div>
                </IconLine>
                <IconLine>
                    <Icon name="stackyellow" size={12} />
                    <Icon name="stackblue" size={12} />
                    <Icon name="stackyellow" size={12} />
                    <Icon name="sheetyellow" size={12} />
                    <Icon name="stackorange" size={12} />
                    <div>&nbsp;Match Layer</div>
                </IconLine>
            </Rows>
        </Panel>
        <Panel title="Block" w={108}>
            <Big icon="insert" label="Insert" w={31} arrow />
            <Rows $w={75}>
                <Small icon="create" label="Create" />
                <Small icon="edit" label="Edit" />
                <Small icon="attr" label="Edit Attributes" lw={52} arrow />
            </Rows>
        </Panel>
        <Panel title="Properties" w={176}>
            <Big icon="match" label="Match Properties" w={42} />
            <Rows $w={13}>
                <Small icon="wheel" />
                <Small icon="weights" />
                <Small icon="types" />
            </Rows>
            <Rows $w={120}>
                <Combo $w={120} $thin>
                    <Slot $w={1} />
                    <Icon name="white" size={13} />
                    <Slot $w={1} />
                    ByLayer
                    <Arrow $size={2.5} />
                </Combo>
                <Combo $w={120} $thin>
                    <Rule $w={39} />
                    ByLayer
                    <Arrow $size={2.5} />
                </Combo>
                <Combo $w={120} $thin>
                    <Rule $w={39} />
                    ByLayer
                    <Arrow $size={2.5} />
                </Combo>
            </Rows>
        </Panel>
        <Panel title="Groups" w={47}>
            <Big icon="group" label="Group" w={30} />
            <Rows $w={14}>
                <Small icon="groupedit" />
                <Small icon="groupadd" />
                <Small icon="groupsel" />
            </Rows>
        </Panel>
        <Panel title="Utilities" w={65}>
            <Big icon="measure" label="Measure" w={48} arrow />
            <Rows $w={14}>
                <Small icon="quick" />
                <Small icon="point" />
                <Small icon="calc" />
            </Rows>
        </Panel>
        <Panel title="Clipboard" w={53} arrow={false}>
            <Big icon="paste" label="Paste" w={36} arrow />
            <Rows $w={14}>
                <Small icon="cut" />
                <Small icon="pages" />
            </Rows>
        </Panel>
        <Panel title="View" w={42}>
            <Big icon="base" label="Base" w={41} arrow />
        </Panel>
        <Panel title="Touch" w={29} arrow={false}>
            <Big icon="touch" label="Select Mode" w={27} />
        </Panel>
    </RibbonRow>
);

/* ---------- document tabs and toolbars ---------- */

const DocTabs = styled.div`
    display: flex;
    align-items: flex-end;
    height: 18px;
    padding-left: 11px;
    background: #383838;
`;

const DocTab = styled.div<{ $w: number; $active?: boolean }>`
    display: flex;
    align-items: center;
    justify-content: space-between;
    width: ${({ $w }) => $w}px;
    height: 15px;
    margin-right: -2px;
    padding: 0 12px 0 ${({ $w, $active }) => ($w < 30 ? 8 : $active ? 6 : 10)}px;
    border-radius: 6px 6px 0 0;
    background: ${({ $active }) => ($active ? 'linear-gradient(#858585, #5e5e5e)' : '#505050')};
    clip-path: polygon(0 100%, 6px 0, calc(100% - 6px) 0, 100% 100%);
    color: ${({ $active }) => ($active ? '#fff' : '#aaa')};
`;

const Close = styled.span`
    color: #353535;
    font-size: 10px;
`;

const ToolRow = styled.div`
    display: flex;
    align-items: center;
    height: 21px;
    padding-left: 6px;
    border-top: 1px solid #6a6a6a;
    border-bottom: 2px solid #484848;
    background: #5a5a5a;
`;

const ToolGroup = styled.div<{ $ml?: number }>`
    display: flex;
    flex: none;
    height: 17px;
    align-items: center;
    margin-left: ${({ $ml = 0 }) => $ml}px;
    box-shadow: -2px 0 0 -1px #444;

    svg {
        margin: 0 1.65px;
    }
`;

const LightCombo = styled.div<{ $w: number; $ml?: number }>`
    display: flex;
    flex: none;
    align-items: center;
    gap: 1px;
    width: ${({ $w }) => $w}px;
    height: 14px;
    margin-left: ${({ $ml = 0 }) => $ml}px;
    padding: 0 2px;
    background: #e1e1e1;
    color: #222;

    svg:last-child {
        margin-left: auto;
    }
`;

const toolGroups: Array<[number, string[]]> = [
    [0.5, ['stack', 'stackgray', 'stackgray']],
    [6, ['stackorange', 'stackgreen', 'stackblue', 'stackblue', 'stackorange', 'stackgray']],
    [4, ['sheetblue', 'sheetwhite', 'sheetgray', 'sheetyellow']],
    [6, ['dim', 'aligned', 'arclen', 'ordinate']],
    [5, ['ring', 'jog', 'diameter', 'angle']],
    [4, ['dimstar', 'baseline', 'cont', 'space', 'breakdim']],
    [4, ['tol', 'center', 'inspect', 'zigzag']],
    [4, ['dimedit', 'dimtext', 'dimupd']],
];

const Workspace = styled.div`
    position: relative;
    display: flex;
    height: 524px;
`;

const SideBar = styled.div`
    display: flex;
    flex: none;
    flex-direction: column;
    align-items: center;
    gap: 3.67px;
    width: 19px;
    padding: 7.5px 1px 0 0;
    border-right: 2px solid #494949;
    background: #5c5c5c;
`;

const sideIcons = [
    'gear', 'redtool', 'purpletool', 'scatter', 'redframe', 'slab', 'box', 'green', 'tools', 'pages', 'redaxis',
    'gridedit', 'cylinder', 'square', 'tiles', 'redcurve', 'dim', 'globe', 'steps', 'grid', 'dwg',
];

/* ---------- drawing ---------- */

const Canvas = styled.svg`
    background: #000;
`;

const AXES = [52.3, 99.3, 148.7, 192.3, 241.7];

const range = (from: number, to: number, step: number) => {
    const out: number[] = [];
    for (let v = from; v <= to; v += step) out.push(v);
    return out;
};

const Bubble = ({ x, y, label, r = 4 }: { x: number; y: number; label: string; r?: number }) => (
    <g>
        <path d={`M${x - r - 2} ${y}h${2 * r + 4}M${x} ${y - r - 2}v${2 * r + 4}`} stroke="#b86a20" strokeWidth=".7" />
        <circle cx={x} cy={y} r={r} fill="#160b00" stroke="#d57a22" strokeWidth="1" />
        <text x={x} y={y + 2.3} fontSize="6.200" fontWeight="700" fill="#f08a2a" textAnchor="middle">{label}</text>
    </g>
);

const Seats = ({ x, y }: { x: number; y: number }) => (
    <g fill="none" stroke="#b59468" strokeWidth=".8">
        <circle cx={x} cy={y} r="3.400" />
        <circle cx={x - 5.2} cy={y - 5.200} r="2.800" />
        <circle cx={x + 5.2} cy={y - 5.200} r="2.800" />
        <circle cx={x - 5.2} cy={y + 5.200} r="2.800" />
        <circle cx={x + 5.2} cy={y + 5.200} r="2.800" />
    </g>
);

/* Room caption with the red area tag under it; w is the width of the longest line */
const Room = ({ x, y, w, lines, color = '#25b4dc' }: {
    x: number;
    y: number;
    w: number;
    lines: string[];
    color?: string;
}) => {
    const longest = Math.max(...lines.map((line) => line.length));

    return (
        <g>
            <rect x={x - 6} y={y + lines.length * 4.500 - 3.500} width="12.500" height="3.300" fill="#e60d0d" />
            {lines.map((line, i) => (
                <text
                    key={line}
                    x={x}
                    y={y + i * 4.5}
                    fontFamily="'Liberation Sans', sans-serif"
                    fontSize="4.600"
                    textAnchor="middle"
                    fill={color}
                    stroke={color}
                    strokeWidth=".15"
                    textLength={(w * line.length) / longest}
                    lengthAdjust="spacingAndGlyphs"
                >
                    {line}
                </text>
            ))}
        </g>
    );
};

const Door = ({ d }: { d: string }) => <path d={d} fill="none" stroke="#c7c425" strokeWidth="1" strokeDasharray="3 .8" />;

const Core = () => (
    <g>
        <path
            d={range(161, 184, 2.7).map((x) => `M${x} 1v10`).join('') + range(8, 30, 3).map((y) => `M149 ${y}h9M183 ${y}h9`).join('')}
            stroke="#1d58a4"
            strokeWidth=".9"
        />
        <path d="M153 26V7h35v21" fill="none" stroke="#707f96" strokeWidth=".6" />
        <path d="M166 2l10 12" stroke="#c8c8c8" strokeWidth=".7" />
        <rect x="159.500" y="14" width="22" height="17" fill="none" stroke="#a5142a" strokeWidth="1.800" />
        <path d="M161.500 16.500H180v10h-3v2h-12v-2h-3.500z" fill="#f2f2f2" />
        <path d="m165 18 12 9M177 18l-12 9M162 21h4M176 21h4" stroke="#222" strokeWidth=".9" />
        <path d="M149.500 27h3v3h-3zM189 29h3v3h-3z" fill="#e8f2fa" />
        <path d="M160 31h5M176 31h6" stroke="#d41c1c" strokeWidth="2" />
        <path d="M165 31.500h11" stroke="#939320" strokeWidth=".7" />
    </g>
);

const Bath = () => (
    <g fill="none" stroke="#b59468" strokeWidth=".8">
        <path d="M193 2h8v3h-4v4M193 15h8M208 1v30" stroke="#b51a2a" strokeWidth="1.400" />
        <circle cx="204" cy="9" r="2.400" />
        <circle cx="204" cy="14" r="2" />
        <path d="M200 6h8v4h-8zM202 17h5v6h-5zM203 23h4v7h-4zM200 13h8M204 6v24" />
        <text x="194" y="22" fontSize="4" fill="#2ea9cc" stroke="none" textLength="8">WC2</text>
        <path d="M195 30V22l6 8z" stroke="#c9c63a" />
    </g>
);

const Plan = ({ x = 440, y, kind, sideX = 270, cut }: {
    x?: number;
    y: number;
    kind: 'show' | 'rooms' | 'roof';
    sideX?: number;
    cut?: boolean;
}) => {
    const dims = kind === 'show'
        ? [33, 40, 93, 146, 153, 170, 189, 193, 208, 224, 240.5]
        : [57, 77.3, 95.7, 112.7, 130, 146, 153.3, 170, 187.7, 192.7, 200.7, 208, 224, 240.7];
    const tags = kind === 'roof' ? [100, 124.500, 145.500, 153.500, 170.500, 187.500, 193, 201, 210, 226, 241] : dims;

    return (
        <g transform={`translate(${x} ${y})`}>
            <path d={AXES.map((a) => `M${a} -8v83`).join('')} stroke="#808080" strokeWidth=".7" strokeDasharray="5 1 1 1" />
            <path d="M19 0h18M19 54h18" stroke="#888" strokeWidth=".7" />
            <path d={`M${kind === 'roof' ? 99 : 35} -9.500H243`} stroke="#a9a9a9" strokeWidth=".8" />
            {tags.map((t, i) => (
                <g key={t}>
                    <rect x={t - (i % 2 ? 2 : 3.5)} y="-12.500" width={i % 2 ? 4.500 : 7} height="3" fill="#c8c8c8" />
                    <path d={`M${t + 1} -10v6`} stroke="#999" strokeWidth=".7" />
                </g>
            ))}
            {kind !== 'roof' && (
                <>
                    <path d="M37 66h205M37 60v7M52 71h190M52 73.500h190M242 60v13M52 63v12" stroke="#929292" strokeWidth=".8" fill="none" />
                    {[44.5, 75.5, 124, 170.5, 217].map((t) => (
                        <rect key={t} x={t - 3.5} y="63" width="7" height="3.300" fill="#c0c0c0" />
                    ))}
                    <rect x="143" y="69.500" width="7" height="4" fill="#c0c0c0" />
                    <path d="M145 68h4v2h-4z" fill="#d8d820" />
                    {AXES.map((a, i) => (
                        <Bubble key={a} x={a} y={79} label={String(i + 1)} />
                    ))}
                </>
            )}
            <path d={cut ? 'M35 4Q30 27 35 54' : 'M23.500 0v54M35 0Q29 27 35 54'} stroke="#8a8a8a" strokeWidth=".7" fill="none" />
            {kind === 'rooms' && <path d="M31 20.500h5v3.500h-5z" fill="#b5b5b5" />}
            {!cut && (
                <>
                    <rect x="20.500" y="25" width="2.500" height="4" fill="#e6e626" />
                    {[0, 54].map((v) => (
                        <g key={v}>
                            <circle cx="17" cy={v} r="2.600" fill="#170c0c" stroke="#c9908b" />
                            <path d={`M12.500 ${v}h9M17 ${v - 4}v8`} stroke="#a27a75" strokeWidth=".6" />
                        </g>
                    ))}
                </>
            )}

            <path d="M37 0H241.500V54H37z" fill="none" stroke="#8e1322" strokeWidth="2.200" />
            <path d="M37 0H241.500V54H37z" fill="none" stroke="#d51c22" strokeWidth="1.200" strokeDasharray="6 2" />
            {kind === 'roof' && (
                <>
                    <path d="M56 0H99M210 0h31.500V53M38 53H241" fill="none" stroke="#1b2a10" strokeWidth="2.600" />
                    <path d="M56 0H99M210 0h31.500V53M38 53H241" fill="none" stroke="#9bd16c" strokeWidth="1.300" />
                </>
            )}
            <path d="M37.800 6v40" stroke={cut ? '#8d8a18' : '#e3df10'} strokeWidth="2.600" strokeDasharray="18 2" />
            {kind !== 'roof' && <path d="M240.800 9v37" stroke="#e8e410" strokeWidth="2.200" strokeDasharray="14 5" />}
            <path d="M148.500 0v36M192.500 0v30" stroke="#b0182a" strokeWidth="1.800" />
            {AXES.map((a) => (
                <path key={a} d={`M${a} -.5h4M${a} 53.500h4`} stroke="#35a457" strokeWidth="2.200" />
            ))}

            <Core />
            <Bath />

            {kind === 'show' && (
                <>
                    <path d="M60 5h88M60 49h70M60 5v44M76 4v-1" stroke="#777" strokeWidth=".7" />
                    <path d="M71 .7h21v3H71zM113 .7h21v3h-21zM71 49.500h21v3H71zM108 49.500h21v3h-21zM46 22h3v15h-3z" fill="#f4f4f4" />
                    {[[85, 14], [111, 14], [136, 14], [90, 40], [119, 40]].map(([cx, cy]) => (
                        <Seats key={`${cx}-${cy}`} x={cx} y={cy} />
                    ))}
                    <Room x={104} y={28} w={61} lines={['SHOWROOM BIỂU DIỄN P. HỌP']} />
                    <path d="M89 29.500h31v3.500H89z" fill="#e60d0d" />
                    <Room x={225} y={24} w={23} lines={['P. LÀM VIỆC']} />
                    <path d="M215 25.500h14v6h-14z" fill="#e60d0d" />
                    <g fill="none" stroke="#b59468" strokeWidth=".9">
                        <path d="M217 11h15v8h-15zM221 5h7v7h-7zM226 34h13v14h-13zM226 40h13" />
                        <circle cx="233" cy="29" r="3" />
                        <circle cx="233" cy="49" r="3" />
                    </g>
                    <path d="M242 -.5h21v55h-21M260.500 -1v56" fill="none" stroke="#0c579c" strokeWidth="1.300" />
                    <path d="m243 0 17 54M260 0l-17 54" stroke="#777" strokeWidth=".7" />
                    <path d="M139 34h9M139 52h9M141 35q8 0 7 8-8 0-7 9M205 38v13h10q0-8-5-12" fill="none" stroke="#d6d326" strokeWidth=".8" />
                    <path d="M157 47h27" stroke="#c8ab8a" strokeWidth=".8" />
                    {range(160, 184, 5).map((v) => (
                        <circle key={v} cx={v} cy="49" r="2.300" fill="none" stroke="#c8ab8a" strokeWidth=".8" />
                    ))}
                    <path d="M192 60h49" stroke="#999" strokeWidth=".8" />
                    <path d="M196 58h6v3h-6zM221 58h6v3h-6z" fill="#bbb" />
                </>
            )}
            {kind === 'rooms' && (
                <>
                    <path d="M78.500 0v38M113 0v38M92 37.500h57M205 31v21" stroke="#bf1726" strokeWidth="1.600" fill="none" />
                    <Door d="M81 27v11M81 27q9 2 10 11M116 27v11M116 27q9 2 10 11M67 51h11M67 51q1-10 11-11M205 41v10h10q0-9-10-10" />
                    <path d="M105 48.500h39v4h-39z" fill="none" stroke="#d0b28c" strokeWidth=".8" />
                    {range(108, 142, 6).map((v) => (
                        <circle key={v} cx={v} cy="50.500" r="2.300" fill="none" stroke="#d0b28c" strokeWidth=".9" />
                    ))}
                </>
            )}
            {kind === 'roof' && (
                <>
                    <Room x={67} y={18} w={49} lines={['SÂN THƯỢNG + SÂN PHƠI']} color={cut ? '#e0e0e0' : undefined} />
                    <path d="M65 19h18v3.300H65z" fill="#e60d0d" />
                    <Seats x={75} y={35} />
                    <path d="M100 0v52M100 30h38" stroke="#b91827" strokeWidth="1.500" fill="none" />
                    <path d="M114 2h15v20h-15zM129 1h15v6h-15zM132 1v6M136 1v6M140 1v6M155 54V40h37M161 54v-9h18v9M165 45v-3h11v3" fill="none" stroke="#b59468" strokeWidth=".8" />
                    <circle cx="107" cy="6" r="2.800" fill="none" stroke="#b59468" strokeWidth=".8" />
                    {!cut && <Room x={121} y={15} w={15} lines={['P. NGHỈ']} />}
                    <Door d="M146 20v9M136 30q1-9 10-9M205 41v8h10q0-8-10-8" />
                    {cut
                        ? <path d="M160 35h18v4h-18z" fill="#e60d0d" />
                        : <path d="M117 38.500h18v4h-18z" fill="#e60d0d" />}
                    <path d="M195 17h9v4h-9z" fill="#2586df" />
                    {!cut && <Room x={226} y={24} w={26} lines={['SÂN THƯỢNG']} />}
                    <path d="M107 48h7v5h-7zM122 48h13v5h-13zM144 46h6v7h-6z" fill="#6a5640" stroke="#b59468" />
                    <path d="M38 1h6l-1 3h-3v3h-2zM236 1h5v8l-2-5z" fill="#ddd" opacity=".8" />
                </>
            )}
            {kind === 'show' && (
                <path d="M273.500 0v54" stroke="#d6d6a0" strokeWidth="2.600" strokeDasharray="6 2" />
            )}
            {kind === 'rooms' && (
                <>
                    <path d="M257 0v54M263.500 0v54M245 0h20M245 54h20" stroke="#a0a0a0" strokeWidth=".8" />
                    <path d="M255 4v48" stroke="#c8c8c8" strokeWidth="3" strokeDasharray="6 5" />
                </>
            )}
            {kind === 'roof' && <path d="M263.500 0v54M245 0h20M245 54h20" stroke="#a0a0a0" strokeWidth=".8" />}
            {kind === 'show'
                ? <path d="M276 0h10M276 54h10M280.500 0v54M278 24h3v7h-3z" fill="#bdbdbd" stroke="#8a8a8a" strokeWidth=".7" />
                : <path d="M260 24h3.500v7H260z" fill={kind === 'roof' ? '#666' : '#bdbdbd'} />}
            {!cut && (
                <>
                    <Bubble x={sideX} y={0} label="B" />
                    <Bubble x={sideX} y={54} label="A" />
                </>
            )}
        </g>
    );
};

const SheetTitle = ({ x, y, w, children }: { x: number; y: number; w: number; children: string }) => (
    <g fill="#ececec" fontFamily="'Liberation Sans', sans-serif" fontWeight="700">
        <text x={x} y={y - 1} fontSize="6.400" textLength={w}>{children}</text>
        <rect x={x} y={y} width={w} height=".9" />
        <text x={x + w / 2 - 8} y={y + 5.5} fontSize="4" textLength="15">TL:1/100</text>
    </g>
);

const Compass = () => (
    <g fontFamily="'Liberation Sans', sans-serif" fontWeight="700" textAnchor="middle" fill="#bdbdbd" fontSize="12.500">
        <circle cx="953.300" cy="203" r="36" fill="none" stroke="#303030" strokeWidth="7.500" />
        <path d="M936 185.500h34.500V220H936z" fill="#a9abad" />
        <path d="M942 191h22v23h-22z" fill="#a1a5ab" />
        <text x="953.300" y="206.500" fontSize="9.500" fill="#4b4e52" textLength="15" lengthAdjust="spacingAndGlyphs">TOP</text>
        <text x="953.300" y="169.500">N</text>
        <text x="915.700" y="207.500">W</text>
        <text x="990.700" y="207.500">E</text>
        <text x="953.300" y="245.500">S</text>
        <rect x="937.500" y="261.500" width="31.500" height="10.500" rx="3" fill="#8f8f93" stroke="#b7b7b7" />
        <text x="948" y="269.500" fontSize="7.500" fontWeight="400" fill="#505055" textLength="17">WCS</text>
        <path d="m961 265 2 3 2-3" fill="none" stroke="#777" strokeWidth=".8" />
    </g>
);

const Drawing = () => (
    <Canvas width="990" height="524" viewBox="19 148 990 524">
        <text x="22" y="160" fontSize="8.200" fill="#e2e2e2" textLength="82">[−][Top][2D Wireframe]</text>
        <path d="M478 149.500h214" stroke="#b5b5b5" strokeWidth="1" />
        <path d="m464 155.500 22 5H693.500V275.300H469.300L468.700 224z" fill="none" stroke="#a3a838" strokeWidth=".9" />
        <path d="M713 177.500h26v98h-26z" fill="none" stroke="#a3a838" strokeWidth=".9" />
        <Plan y={187} kind="show" sideX={287.3} />
        <Plan y={334.5} kind="rooms" />
        <g transform="translate(440 334.500)">
            <Room x={58} y={24} w={24} lines={['P. PIANO', 'THANH NHẠC']} />
            <Room x={93.500} y={15} w={17} lines={['P. PIANO', 'VIOLIN']} />
            <Room x={129} y={15} w={17} lines={['P. PIANO', 'VIOLIN']} />
            <Room x={225} y={26} w={17} lines={['P. DRAW']} />
            <path d="M163 43h18v4h-18z" fill="#e60d0d" />
        </g>
        <Plan y={472} kind="rooms" />
        <g transform="translate(440 472)">
            <Room x={58} y={26} w={15} lines={['P. BAND']} />
            <Room x={94} y={16} w={24} lines={['P. ELECTRIC', 'DRUM']} />
            <Room x={128} y={19} w={20} lines={['P. GUITAR']} />
            <Room x={225} y={23} w={25} lines={['P. TỔNG HỢP']} />
            <path d="M160 44h18v4h-18z" fill="#e60d0d" />
        </g>
        <path d="M600 228h18v3.500h-18z" fill="#e60d0d" />
        <Plan y={610} kind="roof" />
        <path d="M486 613v-15h3" fill="none" stroke="#e01212" strokeWidth=".8" />
        <path d="M488.500 596.500h36v4h-36zM513 667h24v4h-24z" fill="#e01212" />
        <path d="M795.500 672V571H1010" fill="none" stroke="#2c5d9c" strokeWidth="1.200" />
        <Plan x={801} y={608.5} kind="roof" cut />
        <path d="m878 673 140-70" stroke="#2b63aa" strokeWidth="1" />
        <path d="M915 614h15v14h-15z" fill="#050505" stroke="#b59468" strokeWidth=".7" />
        <path d="M915 621h15v7h-15z" fill="#f0f4fa" />
        <path d="M918 623h10v4h-10zM860 626h11v4h-11z" fill="#2586df" />
        <path d="M877 664h22v3h-22z" fill="#fff" />
        <SheetTitle x={329} y={216.500} w={58}>MẶT BẰNG TẦNG 2</SheetTitle>
        <SheetTitle x={316.500} y={355.500} w={58}>MẶT BẰNG TẦNG 3</SheetTitle>
        <SheetTitle x={315} y={495.500} w={58}>MẶT BẰNG TẦNG 4</SheetTitle>
        <SheetTitle x={301} y={633} w={96.500}>MẶT BẰNG TẦNG SÂN THƯỢNG</SheetTitle>
        <Compass />
        <path d="M19 322.300h424M454 322.300h555M448.500 148v169M448.500 328v344" stroke="#c4c4c4" strokeWidth="1" />
        <path d="M443.500 317.500h10v10h-10z" fill="none" stroke="#d5d5d5" />
        <path d="M450.500 321.500v9.500l2.200-2 1.500 3.500 1.600-.700-1.500-3.400h3z" fill="#fff" />
        <path d="M32.500 627v31M29.500 658.500h6v5h-6zM33 661h34M34 616.500l3.700 4.500 3.700-4.500M37.700 621v4.500M69 654l8 7M77 654l-8 7" fill="none" stroke="#b5b5b5" strokeWidth="1" />
    </Canvas>
);

/* ---------- command line ---------- */

const History = styled.div`
    position: absolute;
    left: 51px;
    top: 469px;
    display: grid;
    gap: 2.4px;
    font-family: 'DejaVu Sans Mono', monospace;
    font-size: 7.8px;
    letter-spacing: 0;
`;

const HistoryLine = styled.div<{ $color: string }>`
    height: 11px;
    padding: 0 1px;
    background: #3f3f3f;
    color: ${({ $color }) => $color};
    line-height: 11px;
`;

const CommandBar = styled.div`
    position: absolute;
    left: 11px;
    top: 508px;
    display: flex;
    align-items: center;
    width: 1005px;
    height: 17px;
    background: rgba(197, 197, 197, 0.87);
    color: #6c6c6c;
    font-family: 'DejaVu Sans Mono', monospace;
    font-size: 7.8px;
    font-style: italic;
    letter-spacing: 0;
`;

const CommandGrip = styled.div`
    display: flex;
    align-items: center;
    gap: 6px;
    width: 36px;
    height: 17px;
    padding-left: 2px;
    background: rgba(70, 70, 70, 0.8);
`;

const Prompt = styled.span`
    display: flex;
    align-items: center;
    gap: 2px;
    margin: 0 2px 0 3px;
    padding: 0 2px;
    color: #555;
    font-style: normal;
`;

const ScrollUp = styled.span`
    margin: 0 3px 0 auto;
    border: 2.5px solid transparent;
    border-top: 0;
    border-bottom-color: #222;
`;

/* ---------- external references palette ---------- */

const Palette = styled.div`
    display: flex;
    flex: none;
    flex-direction: column;
    width: 271px;
    padding: 1px 4px 0 5px;
    border-left: 2px solid #505050;
    background: #5c5c5c;
`;

const PaletteTitle = styled.div`
    height: 13px;
    padding: 1px 4px;
    background: #505050;
`;

const PaletteTools = styled.div`
    display: flex;
    align-items: center;
    gap: 5px;
    height: 32px;
    padding: 2px 0 0 3px;
`;

const Section = styled.div<{ $h: number }>`
    display: flex;
    flex: none;
    flex-direction: column;
    height: ${({ $h }) => $h}px;
    border: 1px solid #424242;
`;

const SectionHead = styled.div`
    display: flex;
    flex: none;
    align-items: center;
    gap: 4px;
    height: 13px;
    padding: 0 4px 0 5px;
    background: #4d4d4d;
    color: #fff;
    font-weight: 600;

    span {
        flex: 1;
    }
`;

const refGrid = css`
    display: grid;
    grid-template-columns: 12px 63px 48px 38px 48px 1fr;
`;

const RefHead = styled.div`
    ${refGrid}
    flex: none;
    height: 17px;
    border-top: 1px solid #444;
    border-bottom: 1px solid #474747;
    line-height: 16px;

    span {
        padding-left: 5px;
        border-right: 1px solid #444;
    }
`;

const RefRow = styled.div`
    ${refGrid}
    flex: none;
    height: 12.6px;
    line-height: 12.6px;

    svg {
        margin-top: 1px;
    }

    span {
        padding-left: 4px;
    }

    span:nth-of-type(2) {
        padding-left: 15px;
    }

    span:last-child {
        letter-spacing: -0.5px;
    }
`;

const RefName = styled.span<{ $selected?: boolean }>`
    background: ${({ $selected }) => ($selected ? '#f2f2f2' : 'none')};
    color: ${({ $selected }) => ($selected ? '#222' : 'inherit')};
`;

const ScrollBar = styled.div`
    display: flex;
    align-items: center;
    justify-content: space-between;
    height: 11px;
    margin-top: auto;
    padding: 0 1px;
    background: linear-gradient(90deg, #efefef 11px, #c9c9c9 11px 148px, #efefef 148px);

    svg:first-child {
        transform: rotate(90deg);
    }

    svg:last-child {
        transform: rotate(-90deg);
    }
`;

const Splitter = styled.div`
    height: 6px;
    color: #333;
    line-height: 0;
    text-align: center;
`;

const DetailRow = styled.div<{ $bright?: boolean }>`
    display: grid;
    grid-template-columns: 53px 1fr;
    flex: none;
    height: 14px;
    padding-left: 4px;
    color: #a0a0a0;
    line-height: 15px;

    b {
        color: ${({ $bright }) => ($bright ? '#fff' : '#a0a0a0')};
        font-weight: ${({ $bright }) => ($bright ? 500 : 400)};
    }
`;

const references = [
    ['MBKC*', 'Opened', '119 KB', 'Current', '06/09/2024 2'],
    ['KienTruc', 'Loaded', '881 KB', 'Attach', '05/09/2024 9'],
    ['Xreft Cot', 'Loaded', '172 KB', 'Attach', '06/09/2024 2'],
    ['Xreft luoi', 'Loaded', '83.1 KB', 'Attach', '06/09/2024 2'],
];

const details: Array<[string, string, boolean]> = [
    ['Reference ...', 'Xreft Cot', true],
    ['Status', 'Loaded', false],
    ['Size', '172 KB', false],
    ['Type', 'Attach', true],
    ['Date', '06/09/2024 2:44:52 CH', false],
    ['Found At', 'C:\\Users\\nguye\\OneDrive\\Máy tính\\04.NhaPhoQ9\\01....', false],
    ['Saved Path', '..\\02.Xreft\\Xreft Cot.dwg', true],
];

const References = () => (
    <Palette>
        <PaletteTitle>EXTERNAL REFERENCES</PaletteTitle>
        <PaletteTools>
            <Icon name="dwg" />
            <Arrow />
            <Slot $w={1} />
            <Icon name="refresh" />
            <Arrow />
            <Slot $w={1} />
            <Icon name="tiles" />
            <Arrow />
            <Slot $w={1} />
            <Icon name="help" />
        </PaletteTools>
        <Section $h={266}>
            <SectionHead>
                <span>File References</span>
                <Icon name="list" size={7} />
                <Icon name="tree" size={7} />
            </SectionHead>
            <RefHead>
                <span />
                <span>Reference ... ▴</span>
                <span>Status</span>
                <span>Size</span>
                <span>Type</span>
                <span>Date</span>
            </RefHead>
            {references.map(([name, ...cells], i) => (
                <RefRow key={name}>
                    <Icon name={i ? 'dwg' : 'master'} size={10} />
                    <RefName $selected={i === 2}>{name}</RefName>
                    {cells.map((cell) => (
                        <span key={cell}>{cell}</span>
                    ))}
                </RefRow>
            ))}
            <ScrollBar>
                <Icon name="chevron" size={8} />
                <Icon name="chevron" size={8} />
            </ScrollBar>
        </Section>
        <Splitter>.....</Splitter>
        <Section $h={177}>
            <SectionHead>
                <span>Details</span>
                <Icon name="dwg" size={8} />
                <Icon name="picture" size={9} />
                &nbsp;–
            </SectionHead>
            {details.map(([name, value, bright]) => (
                <DetailRow key={name} $bright={bright}>
                    {name}
                    <b>{value}</b>
                </DetailRow>
            ))}
        </Section>
    </Palette>
);

/* ---------- status bar and taskbar ---------- */

const StatusRow = styled.div`
    position: relative;
    display: flex;
    height: 21px;
    padding: 1px 0 0 9px;
    background: #3b3b3b;
`;

const LayoutTab = styled.div<{ $w: number; $active?: boolean }>`
    flex: none;
    width: ${({ $w }) => $w}px;
    height: 14px;
    border-radius: 0 0 6px 6px;
    background: ${({ $active }) => ($active ? '#858585' : '#505050')};
    clip-path: polygon(0 0, 100% 0, calc(100% - 5px) 100%, 5px 100%);
    color: ${({ $active }) => ($active ? '#fff' : '#b9b9b9')};
    font-weight: ${({ $active }) => ($active ? 700 : 400)};
    letter-spacing: -0.15px;
    line-height: 14px;
    text-align: center;
`;

const StatusCell = styled.div<{ $w: number; $plain?: boolean }>`
    display: flex;
    flex: none;
    align-items: center;
    justify-content: center;
    width: ${({ $w }) => $w}px;
    height: 19px;
    border: 1px solid #6a6a6a;
    border-width: 1px 0 1px 1px;
    border-left-color: ${({ $plain }) => ($plain ? '#474747' : '#646464')};
    background: #474747;
    letter-spacing: -0.2px;
`;

const Recorder = styled.div`
    position: absolute;
    top: 5px;
    right: 0;
    display: flex;
    align-items: center;
    justify-content: space-between;
    width: 381px;
    height: 16px;
    padding: 3px 0 0 7px;
    background: #0a6cb5;
    color: #fff;
    letter-spacing: -0.15px;
`;

const statusCells: Array<[number, string, boolean?]> = [
    [18, 'grid'], [14, ''], [13, '', true], [18, 'snap'], [16, 'dyn'], [15, 'ortho'], [15, 'polar'], [12, '', true],
    [14, 'iso'], [13, '', true], [15, 'otrack'], [15, 'osnap'], [12, '', true], [15, 'lwt'], [17, 'transp'],
    [16, 'select'], [18, 'cube'], [11, '', true], [16, 'ucs'], [15, 'cube'], [12, '', true], [14, 'ring'],
];

const TaskBar = styled.div`
    display: flex;
    align-items: center;
    height: 27px;
    background: linear-gradient(90deg, #243b40, #20383f 40%, #1d3342 66%, #1c3048 68%, #3c3f40 71%, #3c3e40);
    letter-spacing: 0;
`;

const StartButton = styled.div`
    display: flex;
    justify-content: center;
    width: 32px;
`;

const SearchBox = styled.div`
    display: flex;
    align-items: center;
    gap: 8px;
    width: 192px;
    height: 26px;
    padding: 0 0 0 7px;
    background: #f3f3f3;
    color: #404040;
    font-size: 9.7px;
    letter-spacing: -0.15px;

    svg:last-child {
        margin-left: auto;
    }
`;

const Task = styled.div<{ $active?: boolean; $idle?: boolean }>`
    display: flex;
    align-items: center;
    justify-content: center;
    width: 30.7px;
    height: 27px;
    margin-right: 2px;
    border-bottom: 2px solid ${({ $idle }) => ($idle ? 'transparent' : '#69a9dc')};
    background: ${({ $active }) => ($active ? '#4a5d66' : 'none')};
    background-clip: padding-box;
`;

const Tray = styled.div`
    display: flex;
    align-items: center;
    margin-left: auto;
    color: #f0f0f0;
    font-size: 9.2px;
    letter-spacing: -0.1px;
`;

const Language = styled.div`
    width: 15px;
    font-size: 8px;
`;

const Clock = styled.div`
    width: 56px;
    font-size: 8.1px;
    line-height: 12px;
    text-align: center;
`;

const menus: Array<[string, number]> = [
    ['File', 28], ['Edit', 29], ['View', 33], ['Insert', 35], ['Format', 42], ['Tools', 34], ['Draw', 34],
    ['Dimension', 54], ['Modify', 41], ['Parametric', 54], ['Window', 46], ['Help', 33], ['Express', 400],
];

const ribbonTabs: Array<[string, number]> = [
    ['Insert', 33], ['Annotate', 45], ['Parametric', 52], ['View', 30], ['Manage', 42], ['Output', 39],
    ['Add-ins', 41], ['A360', 31], ['Featured Apps', 64], ['Express Tools', 59], ['DBim Apps', 61],
];

const SearchArt = () => (
    <svg width="52" height="24" viewBox="0 0 52 24">
        <path d="M7 12v10M2 17h10M3.500 13.500l7 7M10.500 13.500l-7 7" stroke="#ef5963" strokeWidth="1.300" />
        <path d="m13 14 20-1 7 5-6 5-14-5z" fill="#46386f" />
        <path d="m21 14 12-1 6 5-5 4z" fill="#7365a2" />
        <circle cx="15" cy="8" r="7" fill="#b9b3cf" />
        <circle cx="15" cy="8" r="4" fill="#f2f2f8" stroke="#363150" strokeWidth="1.500" strokeDasharray="3 1" />
        <path d="M29 1v8M25 5h8M26 2l6 6M32 2l-6 6" stroke="#df4f79" />
        <circle cx="41" cy="9" r="3.500" fill="#ebac32" />
        <path d="M41 2v14M34 9h14M36 4l10 10M46 4 36 14" stroke="#ebac32" />
    </svg>
);

const App = () => (
    <Window>
        <GlobalStyle />
        <Header>
            <AppButton>
                <AppLetter>A</AppLetter>
                <Arrow />
            </AppButton>
            <HeaderRows>
                <TitleRow>
                    <QuickBar>
                        {['new', 'open', 'save', 'saveas', 'print', 'undo'].map((name) => (
                            <Icon key={name} name={name} />
                        ))}
                        <Arrow $size={1.5} />
                        <Icon name="redo" />
                        <Arrow $size={1.5} />
                        <Icon name="menu" size={8} />
                    </QuickBar>
                    <Caption>{'Autodesk AutoCAD 2018    MBKC.dwg'}</Caption>
                    <InfoCenter>
                        <KeywordBox>Type a keyword or phrase</KeywordBox>
                        <Icon name="binoculars" />
                        <Slot $w={5} />
                        <Icon name="user" />
                        <SignIn>Sign In</SignIn>
                        <Arrow $size={1.5} />
                        <Slot $w={8} />
                        <Icon name="cart" />
                        <Slot $w={5} />
                        <Icon name="triangle" />
                        <Slot $w={4} />
                        <Arrow $size={1.5} />
                        <HelpDot>?</HelpDot>
                        <Arrow $size={1.5} />
                    </InfoCenter>
                    <WindowButtons>
                        <svg width="68" height="10" viewBox="0 0 68 10" fill="none" stroke="#888" strokeWidth=".8">
                            <path d="M0 5.500h7M30 3.500h5v5h-5zM31.500 3.500V2h5v5H35M61 2l6 6M67 2l-6 6" />
                        </svg>
                    </WindowButtons>
                </TitleRow>
                <MenuBar>
                    <Slot $w={9.5} />
                    {menus.map(([name, w]) => (
                        <Slot key={name} $w={w}>{name}</Slot>
                    ))}
                    <Slot $w={348} />
                    <svg width="30" height="9" viewBox="0 0 30 9" fill="none" stroke="#222" strokeWidth="1.300">
                        <path d="M1 6.500h6M11.500 3.500h4v4h-4zM13.500 3V1h4.500v4h-2M23 2l5 5M28 2l-5 5" />
                    </svg>
                </MenuBar>
            </HeaderRows>
        </Header>
        <RibbonTabs>
            <HomeTab>Home</HomeTab>
            {ribbonTabs.map(([name, w]) => (
                <Slot key={name} $w={w}>{name}</Slot>
            ))}
            <svg width="18" height="6" viewBox="0 0 18 6">
                <rect width="8" height="5" rx="1" fill="#eee" />
                <path d="M3 2h2v1.500H3z" fill="#444" />
                <path d="M12 1.500h3.500l-1.750 2z" fill="#ddd" />
            </svg>
        </RibbonTabs>
        <Ribbon />
        <DocTabs>
            <DocTab $w={88}>KienTruc*<Close>×</Close></DocTab>
            <DocTab $w={86} $active>MBKC*<Close>×</Close></DocTab>
            <DocTab $w={21}>+</DocTab>
        </DocTabs>
        <ToolRow>
            <ToolGroup>
                <Icon name="stackgray" size={12} />
            </ToolGroup>
            <LightCombo $w={199} $ml={1}>
                {['bulb', 'sun', 'freeze', 'lock', 'white'].map((name) => (
                    <Icon key={name} name={name} size={10} />
                ))}
                0
                <Icon name="chevron" size={8} />
            </LightCombo>
            {toolGroups.map(([ml, names], i) => (
                <ToolGroup key={i} $ml={ml}>
                    {names.map((name, n) => (
                        <Icon key={n} name={name} size={12} />
                    ))}
                </ToolGroup>
            ))}
            <LightCombo $w={79} $ml={5.5}>
                <Slot $w={10} />
                A75 che
                <Icon name="chevron" size={8} />
            </LightCombo>
            <ToolGroup $ml={1}>
                <Icon name="dimbrush" size={12} />
            </ToolGroup>
        </ToolRow>
        <Workspace>
            <SideBar>
                {sideIcons.map((name) => (
                    <Icon key={name} name={name} />
                ))}
            </SideBar>
            <Drawing />
            <References />
            <History>
                <HistoryLine $color="#999">Command: *Cancel*</HistoryLine>
                <HistoryLine $color="#bbb">Command: *Cancel*</HistoryLine>
                <HistoryLine $color="#ddd">Command: *Cancel*</HistoryLine>
            </History>
            <CommandBar>
                <CommandGrip>
                    <svg width="18" height="12" viewBox="0 0 18 12">
                        <path d="M2 0v12M5 0v12" stroke="#999" strokeWidth="1.500" strokeDasharray="1 1" />
                        <path d="m10 4 5 5M15 4l-5 5" stroke="#ddd" strokeWidth="1.300" />
                    </svg>
                    <svg width="10" height="10" viewBox="0 0 10 10">
                        <path d="m3 3 6 6M1 1v3h3V1" fill="none" stroke="#ddd" strokeWidth="1.500" />
                    </svg>
                </CommandGrip>
                <Prompt>
                    <svg width="9" height="8" viewBox="0 0 9 8">
                        <path d="M0 0h9v8H0z" fill="#777" />
                        <path d="m1.500 2 2 2-2 2M4.500 6h3" fill="none" stroke="#eee" />
                    </svg>
                    ▾
                </Prompt>
                Type a command
                <ScrollUp />
            </CommandBar>
        </Workspace>
        <StatusRow>
            <LayoutTab $w={36} $active>Model</LayoutTab>
            <LayoutTab $w={44}>mbkcm</LayoutTab>
            <LayoutTab $w={54}>mbkcm (2)</LayoutTab>
            <LayoutTab $w={54}>mbkcm (3)</LayoutTab>
            <LayoutTab $w={54}>mbkcm (4)</LayoutTab>
            <LayoutTab $w={61}>mbkcm (4.1)</LayoutTab>
            <LayoutTab $w={19}>+</LayoutTab>
            <Slot $w={53} />
            <svg width="13" height="14" viewBox="0 0 13 14">
                <path d="m1 3 2 2 2-2M1 8l2 2 2-2" fill="none" stroke="#ddd" strokeWidth="1.300" />
            </svg>
            <StatusCell $w={143}>&nbsp;&nbsp;&nbsp;329810.7196, 175186.2401, 0.0000</StatusCell>
            <StatusCell $w={32}>MODEL</StatusCell>
            {statusCells.map(([w, name, arrow], i) => (
                <StatusCell key={i} $w={w} $plain={arrow || !name}>
                    {arrow ? <Arrow $size={2.5} /> : <Icon name={name} size={11} />}
                </StatusCell>
            ))}
            <Recorder>
                Recording Toolbar
                <Icon name="gear" size={11} />
            </Recorder>
        </StatusRow>
        <TaskBar>
            <StartButton>
                <Icon name="windows" />
            </StartButton>
            <SearchBox>
                <Icon name="search" />
                Type here to search
                <SearchArt />
            </SearchBox>
            <Task $idle>
                <Icon name="taskview" size={12} />
            </Task>
            {['folder', 'chrome', 'notepad', 'bluedoc', 'snip', 'zalo', 'excel', 'acad', 'redapp'].map((name) => (
                <Task key={name} $active={name === 'acad'}>
                    <Icon name={name} size={16} />
                </Task>
            ))}
            <Tray>
                <Icon name="people" />
                <Slot $w={44} />
                <Icon name="storm" size={17} />
                <Slot $w={5} />
                <Slot $w={86}>Lightning nearby</Slot>
                <Icon name="caret" size={10} />
                <Slot $w={6} />
                <Icon name="camera" />
                <Slot $w={4} />
                <Icon name="mic" />
                <Slot $w={6} />
                <Icon name="wifi" size={10} />
                <Slot $w={4} />
                <Icon name="volume" size={12} />
                <Slot $w={4} />
                <Icon name="keyboard" size={16} />
                <Slot $w={7} />
                <Language>ENG</Language>
                <Clock>
                    2:46 CH
                    <br />
                    06/09/2024
                </Clock>
                <Slot $w={4} />
                <Icon name="notify" size={12} />
                <Slot $w={16} />
            </Tray>
        </TaskBar>
    </Window>
);

export default App;
